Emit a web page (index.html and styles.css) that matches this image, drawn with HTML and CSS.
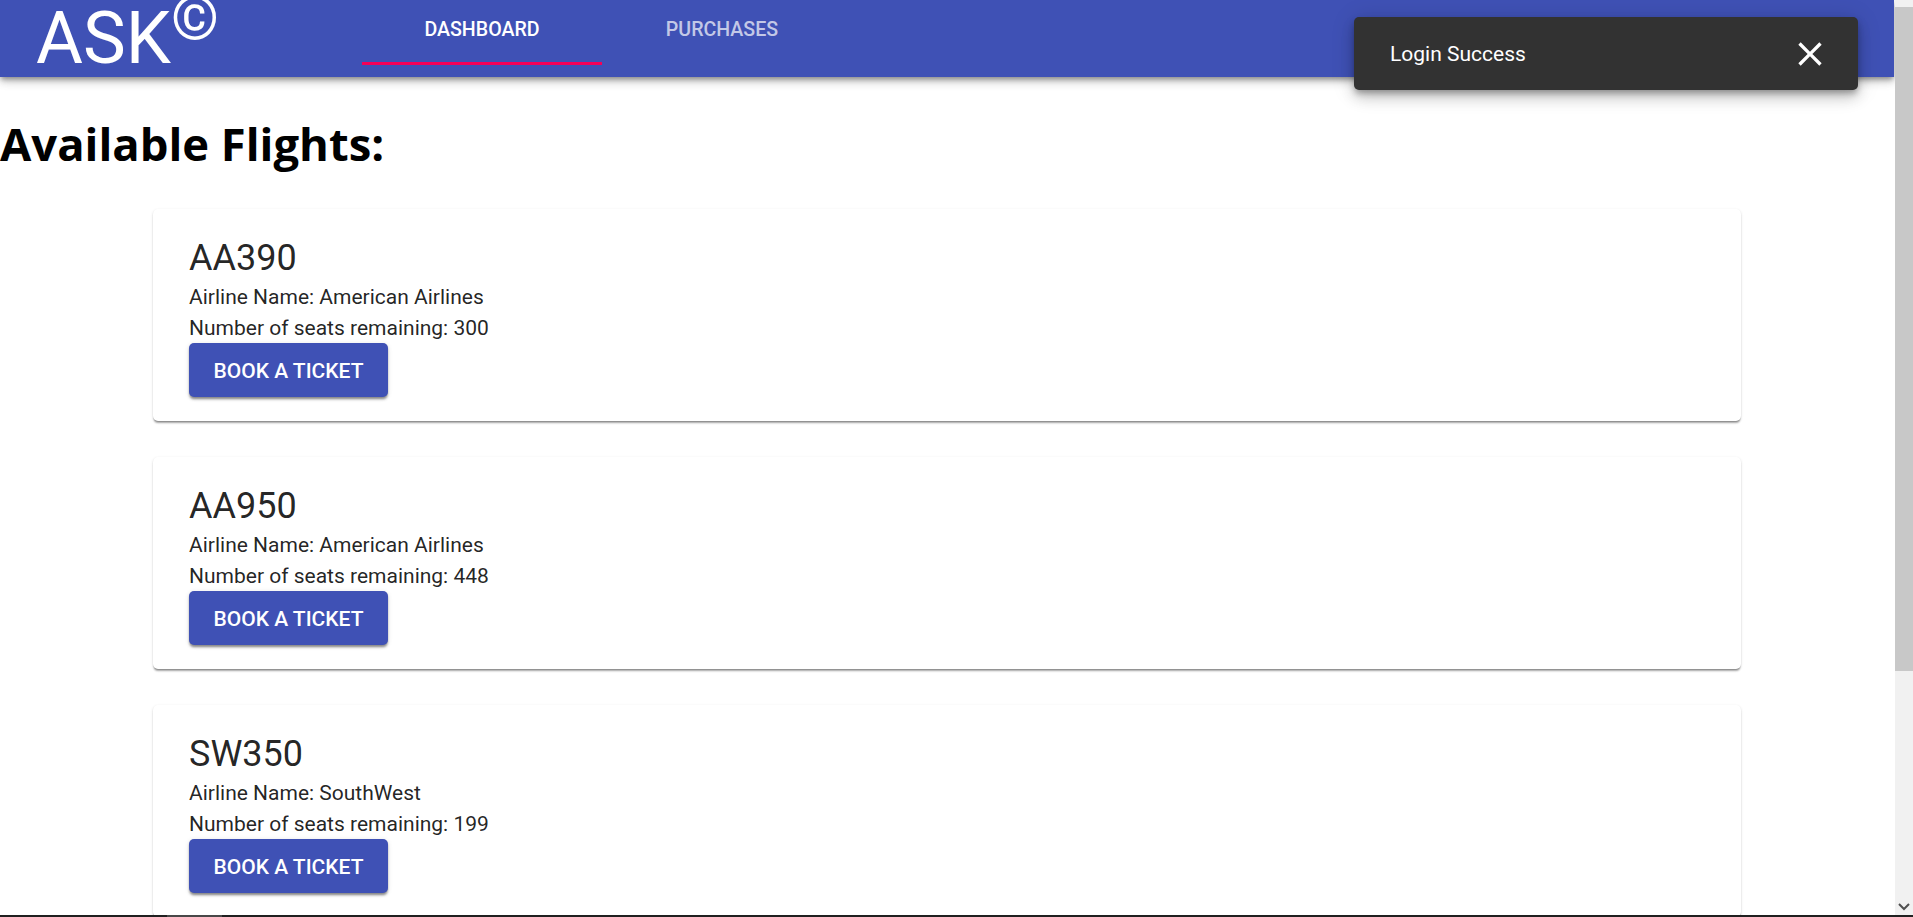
FILE: index.html
```html
<!DOCTYPE html>
<html lang="en">
<head>
    <meta charset="UTF-8">
    <title>ASK - Dashboard</title>
    <link rel="stylesheet" href="styles.css">
</head>
<body>
    <div class="page">
        <header class="app-bar">
            <div class="logo">ASK<span class="logo-mark">©</span></div>
            <nav class="tabs">
                <a class="tab tab-active">Dashboard</a>
                <a class="tab">Purchases</a>
            </nav>
        </header>

        <h1 class="page-title">Available Flights:</h1>

        <div class="flight-list">
            <div class="flight-card">
                <div class="flight-code">AA390</div>
                <div class="flight-info">Airline Name: American Airlines</div>
                <div class="flight-info">Number of seats remaining: 300</div>
                <button class="book-button">Book a ticket</button>
            </div>
            <div class="flight-card">
                <div class="flight-code">AA950</div>
                <div class="flight-info">Airline Name: American Airlines</div>
                <div class="flight-info">Number of seats remaining: 448</div>
                <button class="book-button">Book a ticket</button>
            </div>
            <div class="flight-card">
                <div class="flight-code">SW350</div>
                <div class="flight-info">Airline Name: SouthWest</div>
                <div class="flight-info">Number of seats remaining: 199</div>
                <button class="book-button">Book a ticket</button>
            </div>
        </div>

        <div class="snackbar">
            <span>Login Success</span>
            <svg class="snackbar-close" viewBox="0 0 24 24" width="40" height="40">
                <path fill="#fff" d="M19 6.41 17.59 5 12 10.59 6.41 5 5 6.41 10.59 12 5 17.59 6.41 19 12 13.41 17.59 19 19 17.59 13.41 12z"/>
            </svg>
        </div>
    </div>

    <div class="scrollbar">
        <div class="scroll-thumb"></div>
        <svg class="scroll-arrow" viewBox="0 0 12 8" width="12" height="8">
            <path fill="none" stroke="#505050" stroke-width="2" d="M1 1l5 5 5-5"/>
        </svg>
    </div>
    <div class="bottom-edge"><div class="bottom-edge-part"></div></div>
</body>
</html>
```

FILE: styles.css
```css
html, body {
    margin: 0;
    height: 100%;
    overflow: hidden;
}
body {
    display: grid;
    grid-template-columns: minmax(0, 1fr) 18px;
    grid-template-rows: minmax(0, 1fr) 2px;
    font-family: Roboto, Arial, sans-serif;
    background: #fff;
}
.page {
    grid-column: 1;
    grid-row: 1;
    position: relative;
    overflow: hidden;
}
.app-bar {
    display: flex;
    height: 77px;
    margin-right: 1px;
    background: #3f51b5;
    color: #fff;
    box-shadow: 0 3px 5px -1px rgba(0,0,0,0.35), 0 5px 8px 0 rgba(0,0,0,0.14), 0 1px 14px 0 rgba(0,0,0,0.12);
}
.logo {
    width: 362px;
    padding-left: 36px;
    box-sizing: border-box;
    font-size: 72px;
    line-height: 78px;
    white-space: nowrap;
}
.logo-mark {
    font-size: 61px;
    vertical-align: 24px;
    line-height: 0;
}
.tabs {
    display: flex;
}
.tab {
    display: flex;
    justify-content: center;
    width: 240px;
    height: 65px;
    padding-top: 18px;
    box-sizing: border-box;
    font-size: 19.6px;
    font-weight: 500;
    text-transform: uppercase;
    color: rgba(255,255,255,0.7);
}
.tab-active {
    color: #fff;
    border-bottom: 3px solid #f50057;
}
.page-title {
    margin: 36px 0;
    font-family: "Open Sans", sans-serif;
    font-size: 45.4px;
    font-weight: 700;
    line-height: 60px;
    color: #000;
}
.flight-list {
    display: flex;
    flex-direction: column;
    gap: 36px;
    margin: 0 154px 0 153px;
}
.flight-card {
    padding: 25px 36px 24px;
    border-radius: 5px;
    background: #fff;
    box-shadow: 0 3px 2px -1px rgba(0,0,0,0.3), 0 1px 1px 0 rgba(0,0,0,0.14), 0 1px 3px 0 rgba(0,0,0,0.12);
}
.flight-code {
    font-size: 36px;
    line-height: 48px;
    color: rgba(0,0,0,0.87);
}
.flight-info {
    font-size: 21px;
    line-height: 31px;
    color: rgba(0,0,0,0.87);
}
.book-button {
    display: block;
    width: 199px;
    height: 54px;
    margin-top: -1px;
    padding: 1px 0 0;
    border: none;
    border-radius: 5px;
    background: #3f51b5;
    color: #fff;
    font-family: inherit;
    font-size: 21px;
    font-weight: 500;
    text-transform: uppercase;
    box-shadow: 0 3px 3px -1px rgba(0,0,0,0.35), 0 2px 2px 0 rgba(0,0,0,0.14), 0 1px 5px 0 rgba(0,0,0,0.12);
}
.snackbar {
    position: absolute;
    top: 17px;
    left: 1354px;
    width: 504px;
    height: 73px;
    padding: 0 28px 0 36px;
    box-sizing: border-box;
    display: flex;
    align-items: center;
    justify-content: space-between;
    border-radius: 5px;
    background: #323232;
    color: #fff;
    font-size: 21px;
    box-shadow: 0 4px 6px -1px rgba(0,0,0,0.3), 0 8px 14px 0 rgba(0,0,0,0.16), 0 2px 24px 0 rgba(0,0,0,0.14);
}
.scrollbar {
    grid-column: 2;
    grid-row: 1;
    display: flex;
    flex-direction: column;
    background: #f1f1f1;
    padding-top: 7px;
}
.scroll-thumb {
    height: 664px;
    background: #c8c8c8;
}
.scroll-arrow {
    margin: auto auto 4px;
}
.bottom-edge {
    grid-column: 1 / 3;
    grid-row: 2;
    background: #202020;
}
.bottom-edge-part {
    width: 55px;
    height: 100%;
    margin-left: 167px;
    background: #484848;
}
```
